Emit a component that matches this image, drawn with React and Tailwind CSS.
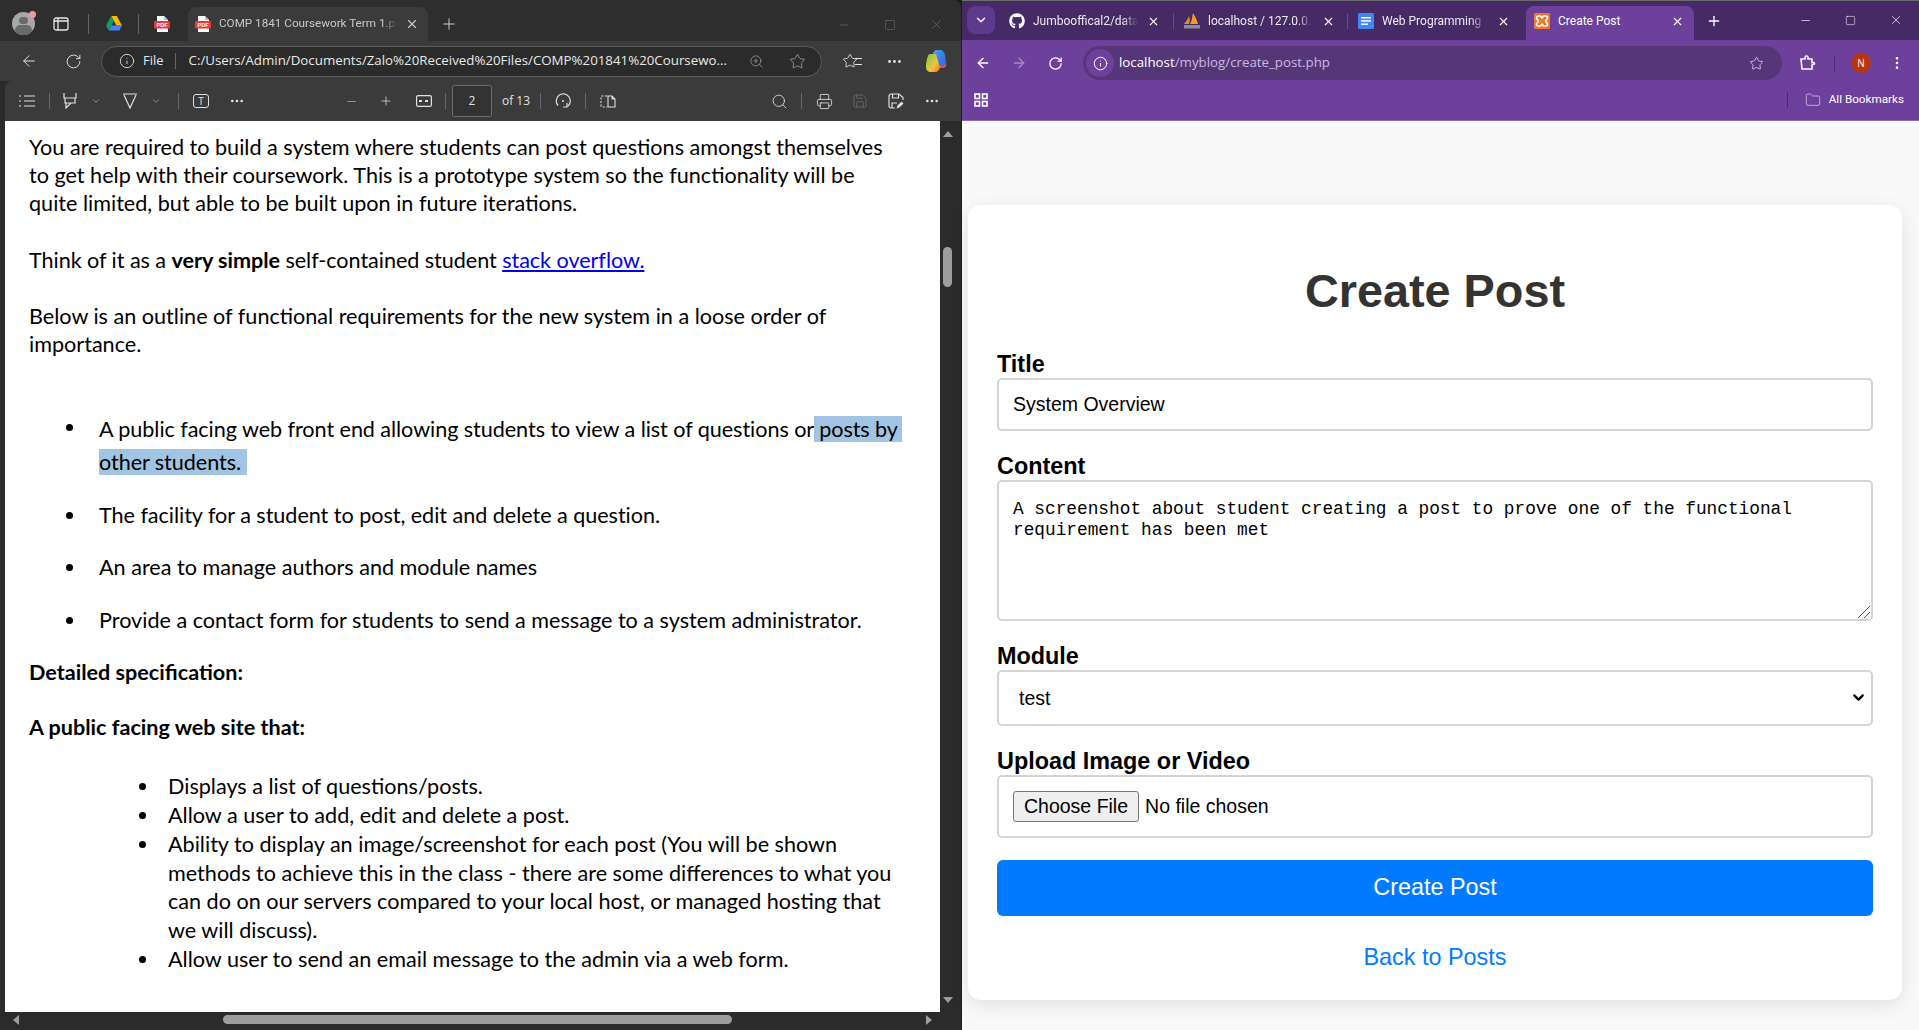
import {
  ArrowLeft,
  ArrowRight,
  ChevronDown,
  Ellipsis,
  EllipsisVertical,
  Folder,
  Info,
  Minus,
  Plus,
  Printer,
  RotateCw,
  Save,
  Search,
  Square,
  Star,
  X,
  ZoomIn,
} from "lucide-react";
import { FaGithub } from "react-icons/fa";

function PdfIcon() {
  return (
    <svg width="16" height="16" viewBox="0 0 16 16" className="shrink-0">
      <path d="M3 0h7l4 4v12H3z" fill="#fff" />
      <path d="M10 0l4 4h-4z" fill="#bbb" />
      <rect x="0" y="5" width="16" height="7.5" rx="1" fill="#e8383b" />
      <text x="8" y="11" textAnchor="middle" fontSize="5.6" fontWeight="700" fill="#fff" fontFamily="Liberation Sans, sans-serif">PDF</text>
    </svg>
  );
}

function DriveIcon() {
  return (
    <svg width="16" height="15" viewBox="0 0 16 15" className="shrink-0">
      <path d="M5.2 0h5.6l5.2 9.5h-5.6z" fill="#fbbc04" />
      <path d="M5.2 0L0 9.5l2.7 5L8 5z" fill="#0f9d58" />
      <path d="M2.7 14.5h10.6l2.7-5H5.3z" fill="#4285f4" />
    </svg>
  );
}

function CopilotIcon() {
  return (
    <svg width="22" height="22" viewBox="0 0 22 22">
      <defs>
        <linearGradient id="cpA" x1="0" y1="0" x2="1" y2="1">
          <stop offset="0" stopColor="#2ea8f0" />
          <stop offset="1" stopColor="#3d5be0" />
        </linearGradient>
        <linearGradient id="cpB" x1="0" y1="0" x2="1" y2="1">
          <stop offset="0" stopColor="#6ccb4f" />
          <stop offset="0.6" stopColor="#f5c33b" />
          <stop offset="1" stopColor="#f0732f" />
        </linearGradient>
        <linearGradient id="cpC" x1="0" y1="0" x2="1" y2="1">
          <stop offset="0" stopColor="#c86bd8" />
          <stop offset="1" stopColor="#f0443f" />
        </linearGradient>
      </defs>
      <path d="M8 3c1-2 2-3 4-3h3c2 0 3 1 3 3l3 10c1 3-1 5-3 5h-4z" fill="url(#cpC)" />
      <path d="M11 0h4c3 0 4 2 5 5l1 6c0 3-2 5-4 5h-3l-3-12C10 2 10 1 11 0z" fill="url(#cpA)" />
      <path d="M5 4h6l4 14c-1 2-2 4-5 4H6c-3 0-5-2-5-5 0-4 1-9 2-11 0-1 1-2 2-2z" fill="url(#cpB)" />
    </svg>
  );
}

function XamppIcon() {
  return (
    <svg width="16" height="16" viewBox="0 0 16 16" className="shrink-0">
      <rect width="16" height="16" rx="1.5" fill="#ed7a2a" />
      <path
        d="M4 3h2.5l1.5 2 1.5-2H12c1.5 0 2 2 1 3l-1.5 2 1.5 2c1 1 .5 3-1 3H9.5L8 11l-1.5 2H4c-1.5 0-2-2-1-3l1.5-2L3 6c-1-1-.5-3 1-3z"
        fill="none"
        stroke="#fff"
        strokeWidth="1.6"
      />
    </svg>
  );
}

function PmaIcon() {
  return (
    <svg width="18" height="16" viewBox="0 0 18 16" className="shrink-0">
      <path d="M1 11C3 8 5 6 6 3c1 3 1 6 0 8z" fill="#e8862d" />
      <path d="M7 11c2-3 2-7 3-11 2 3 4 7 5 11z" fill="#f29a2e" />
      <rect x="1" y="12" width="16" height="3.5" fill="#8a8a98" />
    </svg>
  );
}

function DocsIcon() {
  return (
    <svg width="16" height="16" viewBox="0 0 16 16" className="shrink-0">
      <rect width="16" height="16" rx="1.5" fill="#4285f4" />
      <rect x="3" y="4" width="10" height="1.5" fill="#fff" />
      <rect x="3" y="7.2" width="10" height="1.5" fill="#fff" />
      <rect x="3" y="10.4" width="7" height="1.5" fill="#fff" />
    </svg>
  );
}

function Sep({ className = "h-[22px] bg-[#5a5a5a]" }) {
  return <div className={`w-px shrink-0 ${className}`} />;
}

function EdgeChrome() {
  return (
    <>
      <div className="flex h-[41px] items-end bg-[#2e2e2e] pl-[12px] text-[#d0d0d0]">
        <div className="relative mb-[6px] h-[23px] w-[23px] shrink-0">
          <div className="flex h-full w-full flex-col items-center overflow-hidden rounded-full bg-[#a8a8a8]">
            <div className="mt-[5px] h-[9px] w-[9px] rounded-full bg-[#6a6a6a]" />
            <div className="mt-[1px] h-[12px] w-[17px] rounded-full bg-[#6a6a6a]" />
          </div>
          <div className="absolute right-[-1px] top-[-1px] h-[7px] w-[7px] rounded-full bg-[#ef9a9a]" />
        </div>
        <svg width="16" height="14" viewBox="0 0 16 14" className="mb-[10px] ml-[18px] shrink-0" fill="none" stroke="#e6e6e6" strokeWidth="1.3">
          <rect x="1" y="1" width="14" height="12" rx="2" />
          <path d="M5 1v12M1 4h14" />
        </svg>
        <Sep className="mb-[7px] ml-[19px] h-[20px] bg-[#666]" />
        <div className="mb-[10px] ml-[17px]"><DriveIcon /></div>
        <Sep className="mb-[7px] ml-[16px] h-[20px] bg-[#666]" />
        <div className="mb-[9px] ml-[15px]"><PdfIcon /></div>
        <div className="ml-[18px] flex h-[34px] w-[240px] shrink-0 items-center rounded-t-[8px] bg-[#3b3b3b] pb-[1px] pl-[7px]">
          <PdfIcon />
          <span className="ml-[8px] w-[178px] overflow-hidden whitespace-nowrap text-[11.7px] text-[#c8c8c8] [font-family:Roboto,sans-serif] [mask-image:linear-gradient(to_right,black_92%,transparent)]">COMP 1841 Coursework Term 1.pdf</span>
          <X size={14} className="ml-[8px] text-[#c8c8c8]" />
        </div>
        <Plus size={18} strokeWidth={1.2} className="mb-[8px] ml-[12px] text-[#d8d8d8]" />
        <div className="mb-[9px] ml-auto flex items-center gap-[33px] pr-[17px] text-[#777]">
          <Minus size={14} strokeWidth={1} />
          <Square size={12} strokeWidth={1} />
          <X size={15} strokeWidth={1} />
        </div>
      </div>

      <div className="flex h-[40px] items-center bg-[#3b3b3b] pl-[20px] text-[#e6e6e6]">
        <ArrowLeft size={18} strokeWidth={1.3} />
        <RotateCw size={17} strokeWidth={1.3} className="ml-[27px]" />
        <div className="ml-[19px] flex h-[31px] w-[721px] items-center rounded-full border border-[#5c5c5c] bg-[#2b2b2b] pl-[17px]">
          <Info size={16} strokeWidth={1.3} />
          <span className="ml-[8px] text-[13px] text-[#e6e6e6]">File</span>
          <Sep className="ml-[11px] h-[16px] bg-[#666]" />
          <span className="ml-[13px] w-[540px] whitespace-nowrap text-[13.3px] text-[#e8e8e8]">C:/Users/Admin/Documents/Zalo%20Received%20Files/COMP%201841%20Coursewo...</span>
          <ZoomIn size={15} strokeWidth={1.1} className="ml-[20px] text-[#a8a8a8]" />
          <Star size={17} strokeWidth={1.1} className="ml-[25px] text-[#a8a8a8]" />
        </div>
        <div className="relative ml-[20px]">
          <Star size={16} strokeWidth={1.3} />
          <div className="absolute right-[-4px] top-[5px] h-[7px] w-[7px] border-y border-[#e6e6e6]" />
        </div>
        <Ellipsis size={17} className="ml-[28px]" />
        <div className="ml-[22px]"><CopilotIcon /></div>
      </div>
    </>
  );
}

function PdfToolbar() {
  return (
    <div className="ml-[5px] flex h-[40px] items-center rounded-tl-[8px] bg-[#3b3b3b] text-[#e0e0e0]">
      <svg width="16" height="12" viewBox="0 0 16 12" className="ml-[14px] shrink-0" fill="none" stroke="currentColor" strokeWidth="1.2">
        <path d="M0 1h2M5 1h11M0 6h2M5 6h11M0 11h2M5 11h11" />
      </svg>
      <Sep className="ml-[14px] h-[16px] bg-[#666]" />
      <svg width="14" height="16" viewBox="0 0 14 16" className="ml-[13px] shrink-0" fill="none" stroke="currentColor" strokeWidth="1.2">
        <path d="M1 0v5h12V0M2 5v5h10V5M3 10v5l5-5" />
      </svg>
      <ChevronDown size={10} className="ml-[14px] text-[#9a9a9a]" />
      <svg width="16" height="16" viewBox="0 0 16 16" className="ml-[21px] shrink-0" fill="none" stroke="currentColor" strokeWidth="1.2">
        <path d="M1 1h14M2 2l6 13 6-13" />
      </svg>
      <ChevronDown size={10} className="ml-[13px] text-[#9a9a9a]" />
      <Sep className="ml-[17px] h-[16px] bg-[#666]" />
      <div className="ml-[14px] flex h-[14px] w-[16px] items-center justify-center rounded-[3px] border border-[#e0e0e0] text-[10px] leading-none">T</div>
      <Ellipsis size={16} className="ml-[20px]" />
      <Minus size={13} strokeWidth={1.4} className="ml-[100px] text-[#b0b0b0]" />
      <Plus size={14} strokeWidth={1.3} className="ml-[21px]" />
      <svg width="16" height="12" viewBox="0 0 16 12" className="ml-[23px] shrink-0" fill="none" stroke="currentColor" strokeWidth="1.2">
        <rect x="0.6" y="0.6" width="14.8" height="10.8" rx="1.5" />
        <path d="M3 6h10" strokeWidth="2" strokeDasharray="3 3" />
      </svg>
      <Sep className="ml-[13px] h-[16px] bg-[#666]" />
      <div className="ml-[6px] flex h-[32px] w-[40px] items-center justify-center rounded-[2px] border border-[#6a6a6a] bg-[#333] text-[12px]">2</div>
      <span className="ml-[10px] text-[12px]">of 13</span>
      <Sep className="ml-[10px] h-[16px] bg-[#666]" />
      <svg width="16" height="16" viewBox="0 0 16 16" className="ml-[14px] shrink-0" fill="none" stroke="currentColor" strokeWidth="1.2">
        <path d="M3 12.5A7 7 0 1 1 12.5 13.5" />
        <path d="M12 10v4h-4" />
        <circle cx="8" cy="8" r="1" fill="currentColor" stroke="none" />
      </svg>
      <Sep className="ml-[14px] h-[16px] bg-[#666]" />
      <svg width="16" height="13" viewBox="0 0 16 13" className="ml-[14px] shrink-0" fill="none" stroke="currentColor" strokeWidth="1.1">
        <path d="M7 1H2a1 1 0 0 0-1 1v9a1 1 0 0 0 1 1h5" strokeDasharray="2 1.5" />
        <path d="M8 1h4l3 3v8H8zM12 1v3h3" />
      </svg>
      <Search size={17} strokeWidth={1.2} className="ml-[155px]" />
      <Sep className="ml-[13px] h-[16px] bg-[#666]" />
      <Printer size={17} strokeWidth={1.2} className="ml-[14px]" />
      <Save size={16} strokeWidth={1.2} className="ml-[19px] text-[#6f6f6f]" />
      <svg width="16" height="16" viewBox="0 0 16 16" className="ml-[20px] shrink-0" fill="none" stroke="currentColor" strokeWidth="1.2">
        <path d="M7 15H3a2 2 0 0 1-2-2V3a2 2 0 0 1 2-2h8l4 3.5V7" />
        <path d="M4.5 1v4h6V1M4 15v-5h5" />
        <path d="M8.5 15.5l1-3 4-4 2 2-4 4z" fill="currentColor" stroke="none" />
      </svg>
      <Ellipsis size={16} className="ml-[20px]" />
    </div>
  );
}

function Dot({ left }) {
  return <span className={`absolute top-[11px] h-[7px] w-[7px] rounded-full bg-black ${left}`} />;
}

function PdfPage() {
  return (
    <div className="flex min-h-0 flex-1">
      <div className="w-[5px] bg-[#2b2b2b]" />
      <div className="w-[935px] overflow-hidden bg-white pl-[24px] pt-[12px] text-[21.6px] leading-[28.2px] text-black [font-family:Lato,sans-serif]">
        <p className="whitespace-nowrap">You are required to build a system where students can post questions amongst themselves</p>
        <p className="whitespace-nowrap">to get help with their coursework. This is a prototype system so the functionality will be</p>
        <p className="whitespace-nowrap">quite limited, but able to be built upon in future iterations.</p>
        <p className="mt-[28px] whitespace-nowrap tracking-[-0.05px]">
          Think of it as a <b>very simple</b> self-contained student <a className="text-[#0000ee] underline">stack overflow.</a>
        </p>
        <p className="mt-[28px] whitespace-nowrap">Below is an outline of functional requirements for the new system in a loose order of</p>
        <p className="whitespace-nowrap">importance.</p>

        <ul className="mt-[55px] pl-[70px]">
          <li className="relative whitespace-nowrap leading-[33px] tracking-[-0.06px]">
            <Dot left="left-[-33px]" />
            A public facing web front end allowing students to view a list of questions or<span className="bg-[#a0c4e2] pr-[4px]"> posts by</span>
            <br />
            <span className="bg-[#a0c4e2] pr-[6px]">other students.</span>
          </li>
          <li className="relative mt-[22px] whitespace-nowrap tracking-[-0.04px]">
            <Dot left="left-[-33px]" />
            The facility for a student to post, edit and delete a question.
          </li>
          <li className="relative mt-[24px] whitespace-nowrap">
            <Dot left="left-[-33px]" />
            An area to manage authors and module names
          </li>
          <li className="relative mt-[24px] whitespace-nowrap">
            <Dot left="left-[-33px]" />
            Provide a contact form for students to send a message to a system administrator.
          </li>
        </ul>

        <p className="mt-[24px] whitespace-nowrap font-bold">Detailed specification:</p>
        <p className="mt-[27px] whitespace-nowrap font-bold">A public facing web site that:</p>

        <ul className="mt-[31px] pl-[139px] leading-[28.8px]">
          <li className="relative whitespace-nowrap">
            <Dot left="left-[-29px]" />
            Displays a list of questions/posts.
          </li>
          <li className="relative whitespace-nowrap">
            <Dot left="left-[-29px]" />
            Allow a user to add, edit and delete a post.
          </li>
          <li className="relative whitespace-nowrap">
            <Dot left="left-[-29px]" />
            Ability to display an image/screenshot for each post (You will be shown
            <br />
            methods to achieve this in the class - there are some differences to what you
            <br />
            can do on our servers compared to your local host, or managed hosting that
            <br />
            we will discuss).
          </li>
          <li className="relative whitespace-nowrap">
            <Dot left="left-[-29px]" />
            Allow user to send an email message to the admin via a web form.
          </li>
        </ul>
      </div>
      <div className="flex w-[15px] flex-col items-center bg-[#2b2b2b] pt-[10px]">
        <div className="h-0 w-0 border-x-[5px] border-b-[6px] border-x-transparent border-b-[#9e9e9e]" />
        <div className="mt-[110px] h-[40px] w-[9px] rounded-full bg-[#9e9e9e]" />
        <div className="mt-auto mb-[9px] h-0 w-0 border-x-[5px] border-t-[6px] border-x-transparent border-t-[#9e9e9e]" />
      </div>
    </div>
  );
}

function PdfWindow() {
  return (
    <div className="flex h-full w-[961px] shrink-0 flex-col overflow-hidden rounded-tr-[8px] bg-[#2b2b2b] [font-family:'Open_Sans',sans-serif]">
      <EdgeChrome />
      <PdfToolbar />
      <PdfPage />
      <div className="flex h-[18px] shrink-0 items-center bg-[#2b2b2b] pb-[3px] pl-[13px]">
        <div className="h-0 w-0 border-y-[5px] border-r-[6px] border-y-transparent border-r-[#9e9e9e]" />
        <div className="ml-[204px] h-[9px] w-[509px] rounded-full bg-[#9e9e9e]" />
        <div className="ml-[194px] h-0 w-0 border-y-[5px] border-l-[6px] border-y-transparent border-l-[#9e9e9e]" />
      </div>
    </div>
  );
}

function TabLabel({ children, width }) {
  return (
    <span className={`overflow-hidden whitespace-nowrap text-[12px] text-[#eee8f4] [font-family:Roboto,sans-serif] [mask-image:linear-gradient(to_right,black_85%,transparent)] ${width}`}>
      {children}
    </span>
  );
}

function ChromeBar() {
  return (
    <>
      <div className="flex h-[40px] items-end border-t border-[#6b6b6b] bg-[#452a66] pl-[5px]">
        <div className="mb-[6px] flex h-[28px] w-[28px] shrink-0 items-center justify-center rounded-[8px] bg-[#5e3a8c]">
          <ChevronDown size={14} strokeWidth={2.5} className="text-white" />
        </div>
        <div className="mb-[4px] flex h-[30px] items-center">
          <FaGithub size={16} className="ml-[14px] shrink-0 text-white" />
          <div className="ml-[8px]"><TabLabel width="block w-[105px]">Jumbooffical2/database</TabLabel></div>
          <X size={13} strokeWidth={2} className="ml-[9px] text-white" />
          <Sep className="ml-[13px] h-[16px] bg-[#6b45a0]" />
          <div className="ml-[9px]"><PmaIcon /></div>
          <div className="ml-[7px]"><TabLabel width="block w-[105px]">localhost / 127.0.0.1</TabLabel></div>
          <X size={13} strokeWidth={2} className="ml-[9px] text-white" />
          <Sep className="ml-[12px] h-[16px] bg-[#6b45a0]" />
          <div className="ml-[10px]"><DocsIcon /></div>
          <div className="ml-[8px]"><TabLabel width="block w-[104px]">Web Programming</TabLabel></div>
          <X size={13} strokeWidth={2} className="ml-[11px] text-white" />
        </div>
        <div className="ml-[16px] flex h-[34px] w-[168px] shrink-0 items-center rounded-t-[8px] bg-[#6d409c] pb-[4px] pl-[8px]">
          <XamppIcon />
          <span className="ml-[8px] w-[113px] whitespace-nowrap text-[12px] text-white [font-family:Roboto,sans-serif]">Create Post</span>
          <X size={13} strokeWidth={2} className="text-white" />
        </div>
        <Plus size={16} strokeWidth={2} className="mb-[11px] ml-[12px] text-white" />
        <div className="mb-[13px] ml-auto flex items-center gap-[33px] pr-[16px] text-white">
          <Minus size={13} strokeWidth={1.2} />
          <Square size={11} strokeWidth={1.2} />
          <X size={14} strokeWidth={1.2} />
        </div>
      </div>

      <div className="flex h-[46px] items-center bg-[#6d409c] pl-[13px] text-white">
        <ArrowLeft size={16} strokeWidth={2} />
        <ArrowRight size={16} strokeWidth={2} className="ml-[20px] text-[#a68ac6]" />
        <RotateCw size={15} strokeWidth={2} className="ml-[21px]" />
        <div className="ml-[20px] flex h-[34px] w-[699px] items-center rounded-full bg-[#553779] pl-[3px]">
          <div className="flex h-[28px] w-[28px] items-center justify-center rounded-full bg-[#6d409c]">
            <Info size={15} strokeWidth={1.6} />
          </div>
          <span className="ml-[5px] text-[13.3px] text-white [font-family:'Open_Sans',sans-serif]">
            localhost<span className="text-[#c9b8dd]">/myblog/create_post.php</span>
          </span>
          <Star size={15} strokeWidth={1.6} className="ml-auto mr-[18px] text-[#c9b8dd]" />
        </div>
        <svg width="16" height="16" viewBox="0 0 16 16" className="ml-[18px] shrink-0" fill="none" stroke="currentColor" strokeWidth="1.6">
          <path d="M1 4h4V2.5a1.5 1.5 0 0 1 3 0V4h4v3.5h1.5a1 1 0 0 1 0 2H12V14H2z" />
        </svg>
        <Sep className="ml-[18px] h-[16px] bg-[#4b2a70]" />
        <div className="ml-[16px] flex h-[20px] w-[20px] items-center justify-center rounded-full bg-[#b8360f] text-[10px] text-white">N</div>
        <EllipsisVertical size={16} strokeWidth={2} className="ml-[18px]" />
      </div>

      <div className="flex h-[35px] items-center border-b border-[#8a6bb0] bg-[#6d409c] pb-[6px] pl-[12px] text-white">
        <svg width="14" height="14" viewBox="0 0 14 14" fill="none" stroke="currentColor" strokeWidth="1.6">
          <rect x="1" y="1" width="4.5" height="4.5" />
          <rect x="8.5" y="1" width="4.5" height="4.5" />
          <rect x="1" y="8.5" width="4.5" height="4.5" />
          <rect x="8.5" y="8.5" width="4.5" height="4.5" />
        </svg>
        <Sep className="ml-auto h-[16px] bg-[#4b2a70]" />
        <Folder size={16} strokeWidth={1.2} className="ml-[17px] text-[#d0c4e0]" />
        <span className="ml-[8px] mr-[15px] whitespace-nowrap text-[11.7px] text-white [font-family:Roboto,sans-serif]">All Bookmarks</span>
      </div>
    </>
  );
}

const fieldClass = "block w-full rounded-[5px] border-2 border-[#d4d4d4] bg-white text-black outline-none";

function Field({ label, children }) {
  return (
    <div className="mb-[22px]">
      <label className="block text-[23.4px] font-bold leading-[27px] text-black">{label}</label>
      {children}
    </div>
  );
}

function CreatePostForm() {
  return (
    <div className="ml-[6px] mt-[84px] h-[795px] w-[934px] rounded-[13px] bg-white px-[29px] pt-[59px] shadow-[0_5px_20px_rgba(0,0,0,0.1)] [font-family:'Liberation_Sans',Arial,sans-serif]">
      <h1 className="mb-[33px] text-center text-[46.8px] font-bold leading-[54px] text-[#333]">Create Post</h1>
      <form>
        <Field label="Title">
          <input readOnly defaultValue="System Overview" className={`${fieldClass} h-[53px] px-[14px] text-[19.5px]`} />
        </Field>
        <Field label="Content">
          <div className="relative">
            <textarea
              readOnly
              defaultValue="A screenshot about student creating a post to prove one of the functional requirement has been met"
              className={`${fieldClass} h-[141px] resize-y px-[14px] pt-[17px] text-[17.8px] leading-[21px] [font-family:'Liberation_Mono',monospace]`}
            />
            <svg width="14" height="14" viewBox="0 0 14 14" className="absolute bottom-[2px] right-[2px] bg-white" stroke="#555" strokeWidth="1" fill="none">
              <path d="M1 13L13 1M7 13l6-6" />
            </svg>
          </div>
        </Field>
        <Field label="Module">
          <div className="relative">
            <select className={`${fieldClass} h-[56px] appearance-none px-[20px] pt-[1px] text-[19.5px]`} defaultValue="test">
              <option>test</option>
            </select>
            <ChevronDown size={17} strokeWidth={3.2} className="absolute right-[6px] top-[19px] text-black" />
          </div>
        </Field>
        <Field label="Upload Image or Video">
          <input
            type="file"
            className={`${fieldClass} h-[63px] px-[14px] py-[14px] text-[19.5px] file:mr-[6px] file:h-[31px] file:rounded-[3px] file:border file:border-[#767676] file:bg-[#efefef] file:px-[10px] file:text-[19.5px] file:text-black`}
          />
        </Field>
        <button type="button" className="block h-[56px] w-full rounded-[6px] bg-[#007bff] text-[23.4px] text-white">
          Create Post
        </button>
      </form>
      <a className="mt-[28px] block text-center text-[23.4px] leading-[27px] text-[#007bff]">Back to Posts</a>
    </div>
  );
}

export default function App() {
  return (
    <div className="flex h-[1030px] w-[1919px] overflow-hidden bg-[#1e1e1e]">
      <PdfWindow />
      <div className="ml-px flex min-w-0 flex-1 flex-col bg-[#f9f9f9] [font-family:'Open_Sans',sans-serif]">
        <ChromeBar />
        <CreatePostForm />
      </div>
    </div>
  );
}
